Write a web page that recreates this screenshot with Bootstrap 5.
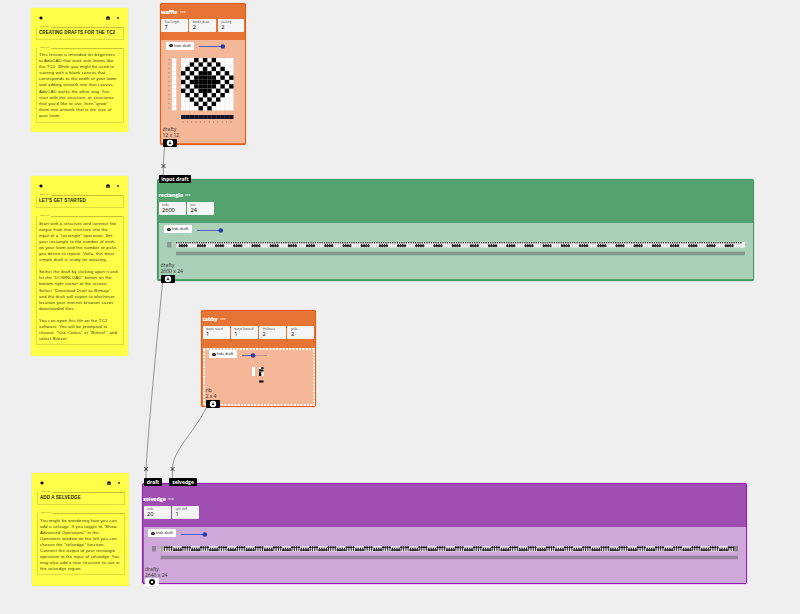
<!DOCTYPE html>
<html lang="en">
<head>
<meta charset="utf-8">
<meta name="viewport" content="width=device-width, initial-scale=1">
<title>AdaCAD workspace</title>
<link href="https://cdn.jsdelivr.net/npm/bootstrap@5.3.0/dist/css/bootstrap.min.css" rel="stylesheet">
<style>
body{background:#efefef;font-family:"Open Sans","Noto Sans",sans-serif;font-size:5px;line-height:6px;color:#222;overflow:hidden}
.board{width:800px;height:614px}
.note,.op,.port,.wires{position:absolute}
.note{background:#ffff4a;width:97px;font-family:"Liberation Sans",Arial,sans-serif;padding:7px 4px 0 5px;color:#3c3c10;box-shadow:0 0 1px #e6e67c}
.note-tools{height:5px;padding:0 4px 0 3px}
.note-tools svg{width:4px;height:4px}
.field{border:.6px solid #dddd3c;border-top:0;border-radius:1px;position:relative;padding-left:2px;white-space:nowrap}
.field::after{content:"";position:absolute;left:14px;right:0;top:0;border-top:.6px solid #c5c52f}
.field-label{position:absolute;left:3px;top:-2px;font-size:2.300px;line-height:3px;font-weight:400;letter-spacing:0;color:#77771e}
.field-title{margin-top:7px;height:13px;font-size:4.500px;line-height:12.500px;font-weight:700;letter-spacing:.1px;color:#25250b}
.field-text{font-size:4.300px;line-height:6.100px;letter-spacing:.16px;padding-top:4px}
.n1{left:31px;top:8px;height:124px}.n1 .field-text{margin-top:8px;height:75px}
.n2{left:31px;top:176px;height:180px}.n2 .field-text{margin-top:8px;height:129px;padding-top:4.500px}
.n3{left:32px;top:473px;height:113px}.n3 .field-text{margin-top:8px;height:62px;padding-top:4.500px}
.op{border:1px solid var(--edge);background:var(--head);border-radius:2px;box-shadow:0 0 1px var(--edge)}
.op-name{color:#fff;font-weight:700;font-size:5.200px;line-height:6px;padding-left:.5px;-webkit-text-stroke:.15px #fff}
.op-name svg{width:6px;height:2px;margin-left:1px;vertical-align:1px}
.param{width:27px;height:13px;background:#f5f5f5;border-radius:1px;padding:2px 0 0 3.500px}
.param small{display:block;font-size:2.800px;line-height:3px;color:#444;white-space:nowrap}
.param b{display:block;font-weight:500;font-size:5.600px;line-height:6px;color:#000}
.draft{background:var(--pale);position:relative;margin:0 .5px}
.toggle{width:28px;height:8px;background:#fff;border-radius:1px;font-size:3.700px;color:#000;white-space:nowrap}
.toggle svg{width:4px;height:3px;margin-right:1px}
.slider{height:5px;display:block;margin-top:2px}
.meta{position:absolute;font-size:5px;line-height:6.300px;white-space:nowrap;color:#2f2f2f}
.port{background:#000;color:#fff;border-radius:1px;font-weight:700;font-size:5px;line-height:8px;height:8px;text-align:center;white-space:nowrap}
.port svg{display:block;margin:0 auto;width:8px;height:8px}
.orange{--edge:#e65c0c;--head:#e67435;--pale:#f4b797}
.green{--edge:#3f9a61;--head:#55a271;--pale:#aad0b7}
.purple{--edge:#9320b0;--head:#9f4eb2;--pale:#cda8d8}
.o1{left:159.500px;top:3px;width:86.500px;height:142px}
.o2{left:157px;top:178.500px;width:597px;height:102px}
.o3{left:201px;top:310px;width:115px;height:97px}
.o4{left:142px;top:482.500px;width:605px;height:101.500px}
.dotted-frame{position:absolute;inset:0;width:100%;height:100%;pointer-events:none}
.weave{display:block}
</style>
</head>
<body>
<svg class="d-none"><defs>
<symbol id="i-pin" viewBox="0 0 8 8"><path d="M0 4L4 .5 8 4 4 7.500Z"/></symbol>
<symbol id="i-palette" viewBox="0 0 8 8"><path d="M.500 1.500h2l.5-1h2l.5 1h2v6h-7Z"/><path d="M2 5.500h4" stroke="#ffff4a" stroke-width="1"/></symbol>
<symbol id="i-close" viewBox="0 0 8 8"><path d="M2.500 2.500l3 3M5.500 2.500l-3 3" stroke="#222" stroke-width="1.800"/></symbol>
<symbol id="i-eye" viewBox="0 0 8 6"><ellipse cx="4" cy="3" rx="4" ry="3"/><circle cx="4" cy="3" r="1" fill="#fff"/></symbol>
<symbol id="i-dots" viewBox="0 0 6 2"><path d="M.300 1h5.200" stroke="#fff" stroke-width="1.200" stroke-dasharray="1.500 .35"/></symbol>
<symbol id="i-down" viewBox="0 0 8 8"><circle cx="4" cy="4" r="3.200" fill="#fff"/><path d="M4 2.500v2.500M3 4.200L4 5.200 5 4.200" stroke="#000" stroke-width="1" fill="none"/></symbol>
<symbol id="i-range" viewBox="0 0 28 5"><path d="M0 2.500h25" stroke="#5361c2"/><circle cx="23.800" cy="2.500" r="2.300" fill="#263cad"/></symbol>
</defs></svg>
<main class="board position-relative">
<section class="note n1">
<div class="note-tools d-flex align-items-center"><svg><use href="#i-pin"/></svg><svg class="ms-auto"><use href="#i-palette"/></svg><svg style="margin-left:6.500px"><use href="#i-close"/></svg></div>
<div class="field field-title"><span class="field-label">Note title</span>CREATING DRAFTS FOR THE TC2</div>
<div class="field field-text"><span class="field-label">Note text</span>This lesson is intended for beginners<br>to AdaCAD that work with looms like<br>the TC2. While you might be used to<br>starting with a blank canvas that<br>corresponds to the width of your loom<br>and adding artwork into that canvas,<br>AdaCAD works the other way. You<br>start with the structure, or structures<br>that you'd like to use, then "grow"<br>them into artwork that is the size of<br>your loom.</div>
</section>
<section class="note n2">
<div class="note-tools d-flex align-items-center"><svg><use href="#i-pin"/></svg><svg class="ms-auto"><use href="#i-palette"/></svg><svg style="margin-left:6.500px"><use href="#i-close"/></svg></div>
<div class="field field-title"><span class="field-label">Note title</span>LET'S GET STARTED</div>
<div class="field field-text"><span class="field-label">Note text</span>Start with a structure and connect the<br>output from that structure into the<br>input of a "rectangle" operation. Set<br>your rectangle to the number of ends<br>on your loom and the number of picks<br>you desire to repeat. Voila, this most<br>simple draft is ready for weaving.<br><br>Select the draft by clicking upon it and<br>hit the "DOWNLOAD" button on the<br>bottom right corner of the screen.<br>Select "Download Draft as Bitmap"<br>and the draft will export to whichever<br>location your internet browser saves<br>downloaded files.<br><br>You can open this file on the TC2<br>software. You will be prompted to<br>choose &nbsp;"Use Colors" or "Bilevel", and<br>select Bilevel.</div>
</section>
<section class="note n3">
<div class="note-tools d-flex align-items-center"><svg><use href="#i-pin"/></svg><svg class="ms-auto"><use href="#i-palette"/></svg><svg style="margin-left:6.500px"><use href="#i-close"/></svg></div>
<div class="field field-title"><span class="field-label">Note title</span>ADD A SELVEDGE</div>
<div class="field field-text"><span class="field-label">Note text</span>You might be wondering how you can<br>add a selvage. If you toggle to "Show<br>Advanced Operations" in the<br>Operators window on the left you can<br>choose the "selvedge" function.<br>Connect the output of your rectangle<br>operation to the input of selvedge. You<br>may also add a new structure to use in<br>the selvedge region.</div>
</section>

<svg class="wires" width="800" height="614" style="left:0;top:0" fill="none" stroke="#555" stroke-width=".6"><path d="M164.500 147L163.300 165V176M162.500 283C158 330 149 420 146 468V480M206 408C196 430 173 450 172.500 468V480"/><path stroke="#111" stroke-width=".8" d="M161.500 164l4 4m0-4l-4 4M144 467l4 4m0-4l-4 4M170.500 467l4 4m0-4l-4 4"/></svg>

<section class="op orange o1">
<div class="op-name" style="padding-top:5px">waffle <svg><use href="#i-dots"/></svg></div>
<div class="d-flex" style="gap:1.500px;padding:4px .5px 0"><div class="param"><small>float length</small><b>7</b></div><div class="param"><small>bindin_draw</small><b>2</b></div><div class="param"><small>packing</small><b>2</b></div></div>
<div class="draft" style="margin-top:8px;height:103px">
<div class="d-flex align-items-center" style="padding:1.600px 0 0 5px"><div class="toggle d-flex align-items-center justify-content-center"><svg><use href="#i-eye"/></svg>hide draft</div><svg class="slider" style="margin-left:5px" width="28" height="5"><use href="#i-range"/></svg></div>
<svg id="waffle" class="weave" width="80" height="74" style="margin-top:4.600px"></svg>
<div class="meta" style="left:1.500px;top:86px">drafty<br>12 x 12</div>
</div></section>
<div class="port" style="left:163px;top:139px;width:14px"><svg><use href="#i-down"/></svg></div>

<section class="op green o2">
<div class="op-name" style="padding-top:12.500px">rectangle <svg><use href="#i-dots"/></svg></div>
<div class="d-flex" style="gap:1.500px;padding:4px .5px 0"><div class="param"><small>ends</small><b>2600</b></div><div class="param"><small>pics</small><b>24</b></div></div>
<div class="draft" style="margin-top:8px;height:56px">
<div class="d-flex align-items-center" style="padding:2px 0 0 5px"><div class="toggle d-flex align-items-center justify-content-center"><svg><use href="#i-eye"/></svg>hide draft</div><svg class="slider" style="margin-left:5px" width="28" height="5"><use href="#i-range"/></svg></div>
<svg id="bandA" class="weave" width="592" height="18" style="margin-top:6.500px"></svg>
<div class="meta" style="left:2px;top:38.500px">drafty<br>2600 x 24</div>
</div></section>
<div class="port" style="left:159px;top:175px;width:32px">input draft</div>
<div class="port" style="left:161px;top:275px;width:14px"><svg><use href="#i-down"/></svg></div>

<section class="op orange o3">
<div class="op-name" style="padding-top:5px">tabby <svg><use href="#i-dots"/></svg></div>
<div class="d-flex" style="gap:1.300px;padding:4px .5px 0"><div class="param"><small>warps raised</small><b>1</b></div><div class="param"><small>warps lowered</small><b>1</b></div><div class="param"><small>thickness</small><b>2</b></div><div class="param"><small>picks</small><b>2</b></div></div>
<div class="draft" style="margin-top:9px;height:58px">
<svg class="dotted-frame" fill="none" stroke="#fff" stroke-width="2" stroke-dasharray="1.800 1.500"><path d="M.500 1H111V57H1V1"/></svg>
<div class="d-flex align-items-center" style="padding:2.300px 0 0 6px"><div class="toggle d-flex align-items-center justify-content-center"><svg><use href="#i-eye"/></svg>hide draft</div><svg class="slider" style="margin-left:5px" width="28" height="5"><path d="M0 2.500h25" stroke="#c58d91"/><path d="M0 2.500h11" stroke="#5361c2"/><circle cx="11" cy="2.500" r="2.300" fill="#263cad"/></svg></div>
<svg class="weave" width="80" height="24" style="margin-top:6.700px"><path fill="#fff" d="M49 2h3v9h-3zM56 2h4.500v9h-4.500z"/><path d="M58.300 2h2.200v2h-2.200zM56 4.200h2.300v2h-2.300zM58.300 4.500h2.200v2h-2.200zM56 6.700h2.300v4.300h-2.300zM56 15.500h4.500v2h-4.500z"/></svg>
<div class="meta" style="left:3px;top:38.500px">rib<br>2 x 4</div>
</div></section>
<div class="port" style="left:206px;top:400px;width:14px"><svg><use href="#i-down"/></svg></div>

<section class="op purple o4">
<div class="op-name" style="padding-top:12.500px;padding-left:.2px">selvedge <svg><use href="#i-dots"/></svg></div>
<div class="d-flex" style="gap:1.500px;padding:4px .5px 0"><div class="param"><small>ends</small><b>20</b></div><div class="param"><small>split shift</small><b>1</b></div></div>
<div class="draft" style="margin-top:8px;height:56px">
<div class="d-flex align-items-center" style="padding:2px 0 0 4.500px"><div class="toggle d-flex align-items-center justify-content-center"><svg><use href="#i-eye"/></svg>hide draft</div><svg class="slider" style="margin-left:5px" width="28" height="5"><use href="#i-range"/></svg></div>
<svg id="bandB" class="weave" width="600" height="18" style="margin-top:6.500px"></svg>
<div class="meta" style="left:1.500px;top:38.500px">drafty<br>2640 x 24</div>
</div></section>
<div class="port" style="left:144px;top:478px;width:18px">draft</div>
<div class="port" style="left:169px;top:478px;width:28px">selvedge</div>
<div class="port" style="left:145px;top:578px;width:14px;background:#fff"><svg viewBox="0 0 8 8"><circle cx="4" cy="4" r="2.100" fill="#fff" stroke="#000" stroke-width="1.700"/></svg></div>
</main>
<script>
const rows=["000101010000","001010101000","010101010100","101011101010","010111110101","101111111010","010111110101","101011101010","010101010100","001010101000","000101010000","000010100000"];
const box=(x,y,w,h,f)=>`<rect x="${x}" y="${y}" width="${w}" height="${h}" fill="${f}"/>`;
// waffle drawdown with its threading strips
const c=4.375;
let s=box(20,4,52.5,52.5,"#fff")+box(11,4,4.3,52.5,"#fff");
for(let i=0;i<=12;i++){s+=box(11,4+i*c,4.3,.3,"#cbb")+box(20,4+i*c,52.5,.2,"#ccc")+box(20+i*c,4,.2,52.5,"#ccc")}
rows.forEach((r,y)=>[...r].forEach((v,x)=>{if(v==="1")s+=box(20+x*c,4+y*c,4.4,4.3,"#000")}));
s+=box(20,61,52.5,4,"#15152a");
for(let i=0;i<12;i++){s+=box(20+i*c,61,.3,4,"#556")+box(21.5+i*c,67,.8,2,"#b98b74")+box(7.2,5+i*c,1.5,1.2,"#b98b74")}
document.getElementById("waffle").innerHTML=s;
// repeating weave bands
function band(id,x0,w,flip,y){
 let t=box(x0-(flip?8.5:9),y,flip?4:4.5,5.5,flip?"#93829a":"#889d90")+box(x0,y,w,5.5,flip?"#e6dfe8":"#f2f5f3");
 for(let x=flip?3.2:0;x<w-3;x+=18.2){
  for(let k=0;k<8;k++){const px=x+k*2.275;if(px>w-3)break;
   if(flip){
    if(k<4)t+=box(x0+px,y+.6,1.9,1.5,"#111")+box(x0+px+.5,y+.2,.9,4.6,"#222");
    else t+=box(x0+px,y+3.4,2.3,1.4,"#111")+box(x0+px+.6,y+1.6,1.1,3,"#222");
   }else{
    t+=box(x0+px,y+.1,1.4,1.3,"#222");
    if(k>0&&k<5)t+=box(x0+px+.4,y+3,2.3,1.6,"#111")+box(x0+px+.9,y+1.8,1.1,3.4,"#222");
    else t+=box(x0+px+.3,y+2,.4,3,"#bbb");
   }}}
 if(flip)t+=box(x0,y,3,5.5,"#aaa6a4")+box(x0+w-4,y,4,5.5,"#8d8090");
 t+=box(x0,y+9.7,w,3.6,flip?"#9a819f":"#86998d");
 document.getElementById(id).innerHTML=t;
}
band("bandA",17,569,false,2);
band("bandB",16.5,577.5,true,2);
</script>
<script src="https://cdn.jsdelivr.net/npm/bootstrap@5.3.0/dist/js/bootstrap.bundle.min.js"></script>
</body>
</html>
